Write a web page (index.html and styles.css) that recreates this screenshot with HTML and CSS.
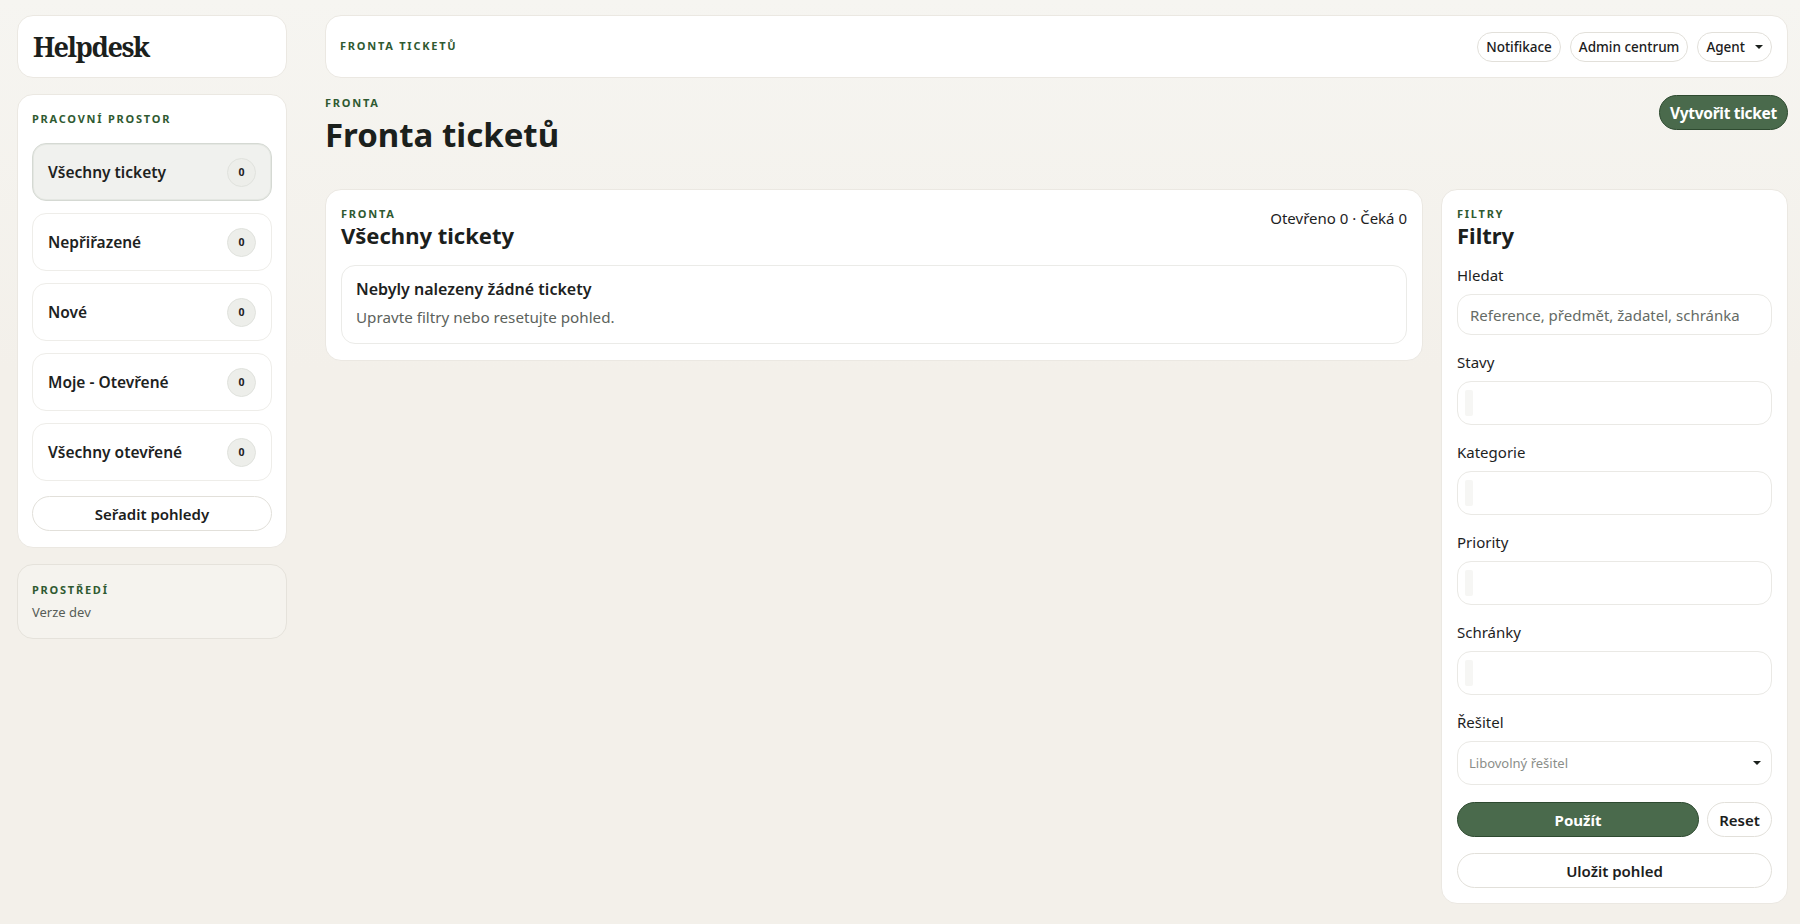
FILE: index.html
```html
<!DOCTYPE html>
<html lang="cs">
<head>
    <meta charset="UTF-8">
    <meta name="viewport" content="width=device-width, initial-scale=1.0">
    <title>Fronta ticketů · Helpdesk</title>
    <link rel="stylesheet" href="styles.css">
</head>
<body>
    <div class="app">
        <!-- Left column: brand, saved views, environment -->
        <aside class="sidebar">
            <div class="card brand">Helpdesk</div>

            <nav class="card workspace">
                <div class="eyebrow">Pracovní prostor</div>
                <ul class="views">
                    <li class="view active"><span>Všechny tickety</span><span class="count">0</span></li>
                    <li class="view"><span>Nepřiřazené</span><span class="count">0</span></li>
                    <li class="view"><span>Nové</span><span class="count">0</span></li>
                    <li class="view"><span>Moje - Otevřené</span><span class="count">0</span></li>
                    <li class="view"><span>Všechny otevřené</span><span class="count">0</span></li>
                </ul>
                <button class="btn btn-block">Seřadit pohledy</button>
            </nav>

            <div class="card env">
                <div class="eyebrow">Prostředí</div>
                <div class="env-version">Verze dev</div>
            </div>
        </aside>

        <main class="main">
            <header class="card topbar">
                <div class="eyebrow">Fronta ticketů</div>
                <div class="topbar-actions">
                    <button class="btn btn-sm">Notifikace</button>
                    <button class="btn btn-sm">Admin centrum</button>
                    <button class="btn btn-sm">Agent <span class="caret"></span></button>
                </div>
            </header>

            <div class="page-head">
                <div>
                    <div class="eyebrow">Fronta</div>
                    <h1>Fronta ticketů</h1>
                </div>
                <button class="btn btn-primary">Vytvořit ticket</button>
            </div>

            <div class="content">
                <section class="card queue">
                    <div class="queue-head">
                        <div>
                            <div class="eyebrow">Fronta</div>
                            <h2>Všechny tickety</h2>
                        </div>
                        <div class="queue-stats">Otevřeno 0 · Čeká 0</div>
                    </div>
                    <div class="empty">
                        <div class="empty-title">Nebyly nalezeny žádné tickety</div>
                        <div class="empty-text">Upravte filtry nebo resetujte pohled.</div>
                    </div>
                </section>

                <aside class="card filters">
                    <div class="eyebrow">Filtry</div>
                    <h2>Filtry</h2>

                    <label class="field">
                        <span class="field-label">Hledat</span>
                        <input class="input" type="text" placeholder="Reference, předmět, žadatel, schránka">
                    </label>
                    <div class="field">
                        <span class="field-label">Stavy</span>
                        <div class="tags"><span class="tags-cursor"></span></div>
                    </div>
                    <div class="field">
                        <span class="field-label">Kategorie</span>
                        <div class="tags"><span class="tags-cursor"></span></div>
                    </div>
                    <div class="field">
                        <span class="field-label">Priority</span>
                        <div class="tags"><span class="tags-cursor"></span></div>
                    </div>
                    <div class="field">
                        <span class="field-label">Schránky</span>
                        <div class="tags"><span class="tags-cursor"></span></div>
                    </div>
                    <div class="field">
                        <span class="field-label">Řešitel</span>
                        <div class="select"><span>Libovolný řešitel</span><span class="caret"></span></div>
                    </div>

                    <div class="filter-actions">
                        <button class="btn btn-primary grow">Použít</button>
                        <button class="btn">Reset</button>
                    </div>
                    <button class="btn btn-block">Uložit pohled</button>
                </aside>
            </div>
        </main>
    </div>
</body>
</html>
```

FILE: styles.css
```css
* {
    box-sizing: border-box;
}

body {
    margin: 0;
    min-height: 100vh;
    background: linear-gradient(180deg, #f6f5f1 0%, #f3f0ea 40%, #f3f0ea 100%);
    color: #1d221e;
    font-family: "Noto Sans", "Open Sans", sans-serif;
    font-size: 15px;
}

button, input {
    font-family: inherit;
}

.app {
    display: grid;
    grid-template-columns: 270px 1fr;
    gap: 38px;
    padding: 15px 12px 16px 17px;
}

/* --- shared --- */

.card {
    background: #fff;
    border: 1px solid #ebe8e2;
    border-radius: 16px;
}

.eyebrow {
    font-size: 11px;
    line-height: 14px;
    font-weight: 700;
    letter-spacing: 0.16em;
    text-transform: uppercase;
    color: #2f5a31;
}

h1, h2 {
    margin: 0;
    color: #1b201c;
}

h2 {
    font-size: 22px;
    line-height: 28px;
    font-weight: 700;
}

.btn {
    height: 35px;
    padding: 0 16px;
    border: 1px solid #e2e0da;
    border-radius: 999px;
    background: #fff;
    color: #1b201c;
    font-size: 15px;
    font-weight: 600;
    cursor: pointer;
}

.btn-block {
    width: 100%;
}

.btn-sm {
    height: 30px;
    padding: 0 8px;
    font-size: 13.5px;
    font-weight: 500;
    display: inline-flex;
    align-items: center;
    gap: 10px;
}

.btn-primary {
    background: #4a6a4c;
    border-color: #2e4a30;
    color: #fff;
    font-weight: 700;
}

.page-head .btn-primary {
    padding: 0 10px;
    font-size: 15.5px;
    letter-spacing: -0.3px;
}

.caret {
    width: 0;
    height: 0;
    border-left: 4px solid transparent;
    border-right: 4px solid transparent;
    border-top: 4px solid #1b201c;
}

/* --- sidebar --- */

.sidebar {
    display: flex;
    flex-direction: column;
    gap: 16px;
}

.brand {
    height: 63px;
    display: flex;
    align-items: center;
    padding: 0 15px;
    font-family: "Noto Serif", "Liberation Serif", serif;
    font-size: 27px;
    font-weight: 700;
    letter-spacing: -1.5px;
    color: #1b201c;
}

.workspace {
    padding: 17px 14px 16px;
}

.views {
    list-style: none;
    margin: 17px 0 15px;
    padding: 0;
    display: flex;
    flex-direction: column;
    gap: 12px;
}

.view {
    height: 58px;
    display: flex;
    align-items: center;
    justify-content: space-between;
    padding: 0 15px 0 15px;
    border: 1px solid #eeede9;
    border-radius: 14px;
    font-size: 15.5px;
    font-weight: 600;
}

.view.active {
    background: #f0f1ee;
    border-color: #d5d9d3;
    box-shadow: inset 0 0 0 1px #e4e7e2;
}

.count {
    width: 29px;
    height: 29px;
    border-radius: 50%;
    background: #edeeea;
    border: 1px solid #e0e2dd;
    display: flex;
    align-items: center;
    justify-content: center;
    font-size: 10.5px;
    font-weight: 700;
}

.env {
    background: #f5f3ee;
    border-color: #e5e2db;
    padding: 18px 14px 16px;
}

.env-version {
    margin-top: 5px;
    font-size: 13px;
    line-height: 20px;
    color: #575d57;
}

/* --- main --- */

.topbar {
    height: 63px;
    display: flex;
    align-items: center;
    justify-content: space-between;
    padding: 0 15px 0 14px;
}

.topbar .eyebrow {
    margin-top: -2px;
}

.topbar-actions {
    display: flex;
    gap: 9px;
}

.page-head {
    display: flex;
    justify-content: space-between;
    align-items: flex-start;
    margin-top: 17px;
    height: 94px;
}

.page-head .eyebrow {
    margin-top: 1px;
}

h1 {
    font-size: 33px;
    line-height: 40px;
    font-weight: 700;
    margin-top: 5px;
}

.content {
    display: grid;
    grid-template-columns: 1fr 347px;
    gap: 18px;
    align-items: start;
}

.queue {
    padding: 17px 15px 16px;
}

.queue-head {
    display: flex;
    justify-content: space-between;
    align-items: flex-start;
}

.queue-stats {
    font-size: 15px;
    margin-top: 1px;
}

.empty {
    margin-top: 16px;
    border: 1px solid #ebebe8;
    border-radius: 14px;
    padding: 13px 14px 16px;
}

.empty-title {
    font-size: 16px;
    line-height: 20px;
    font-weight: 600;
}

.empty-text {
    margin-top: 8px;
    font-size: 15.2px;
    line-height: 20px;
    color: #5c625c;
}

/* --- filters --- */

.filters {
    padding: 17px 15px 15px;
}

.field {
    display: flex;
    flex-direction: column;
    gap: 9px;
    margin-top: 16px;
}

.field + .field {
    margin-top: 17px;
}

.field-label {
    font-size: 15px;
    line-height: 20px;
}

.input,
.tags,
.select {
    width: 100%;
    height: 44px;
    border: 1px solid #eae9e5;
    border-radius: 14px;
    background: #fff;
}

.input {
    height: 41px;
    padding: 0 12px;
    font-size: 15px;
    color: #1b201c;
    outline: none;
}

.input::placeholder {
    color: #656b65;
}

.tags {
    display: flex;
    align-items: center;
    padding: 0 7px;
}

.tags-cursor {
    width: 8px;
    height: 26px;
    background: #f6f6f4;
    border-radius: 2px;
}

.select {
    display: flex;
    align-items: center;
    justify-content: space-between;
    padding: 0 10px 0 11px;
    font-size: 13px;
    color: #8b8e89;
}

.filter-actions {
    display: flex;
    gap: 8px;
    margin: 17px 0 16px;
}

.grow {
    flex: 1;
}

.filter-actions .btn:last-child {
    width: 65px;
    padding: 0;
}
```
